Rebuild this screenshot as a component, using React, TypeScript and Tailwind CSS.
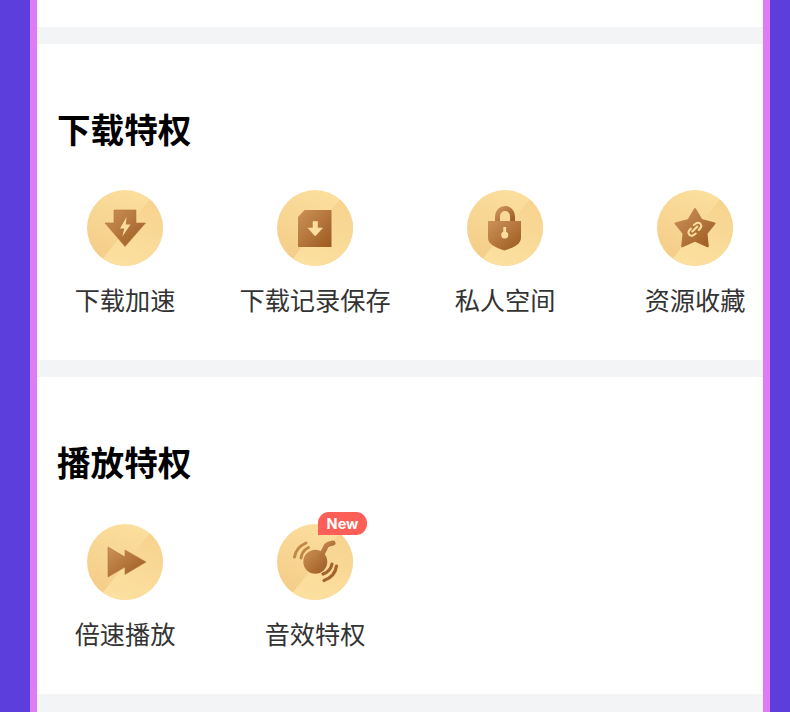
import type { ReactNode } from "react";

const cream = "#fbdd9f";
const brown = "url(#glyph)";

// shared gradients live in one hidden svg so each badge can reference them
function SharedDefs() {
  return (
    <svg width="0" height="0" className="absolute">
      <defs>
        <linearGradient id="glyph" x1="0" y1="0" x2="1" y2="1">
          <stop offset="0" stopColor="#cc9257" />
          <stop offset="1" stopColor="#9c5a1f" />
        </linearGradient>
        <linearGradient id="discLeft" x1="0.7" y1="0" x2="0.2" y2="1">
          <stop offset="0" stopColor="#fcdf9e" />
          <stop offset="1" stopColor="#f3cc87" />
        </linearGradient>
        <linearGradient id="discRight" x1="0.8" y1="0" x2="0.4" y2="1">
          <stop offset="0" stopColor="#f6d18c" />
          <stop offset="1" stopColor="#fce0a0" />
        </linearGradient>
        <clipPath id="discClip">
          <circle cx="38" cy="38" r="38" />
        </clipPath>
      </defs>
    </svg>
  );
}

function Disc({ children }: { children: ReactNode }) {
  return (
    <svg width="76" height="76" viewBox="0 0 76 76" className="block">
      <circle cx="38" cy="38" r="38" fill="url(#discLeft)" />
      <path d="M70 0 L10 76 H76 V0 Z" fill="url(#discRight)" clipPath="url(#discClip)" />
      {children}
    </svg>
  );
}

const icons: Record<string, ReactNode> = {
  speed: (
    <>
      <path d="M27 20 H49 V33 H58.5 L38 56.5 L18 33 H27 Z" fill={brown} stroke="#b3763a" strokeWidth="0.6" strokeLinejoin="round" />
      <path d="M39.5 27 L33 38.5 H37.3 L35.3 46.5 L43.5 34.5 H38.8 Z" fill={cream} />
    </>
  ),
  record: (
    <>
      <path d="M27.5 20 H54.5 V57 H21 V27 Z" fill={brown} />
      <path d="M36 31.5 H40.5 V38 H45.5 L38.2 46 L31 38 H36 Z" fill={cream} stroke={cream} strokeWidth="0.6" strokeLinejoin="round" />
    </>
  ),
  lock: (
    <>
      <path d="M30.5 33 V26 A7.5 7.5 0 0 1 45.5 26 V33" fill="none" stroke={brown} strokeWidth="5" />
      <path d="M21 31 H54 V48 C54 54 46 58 37.5 60.5 C29 58 21 54 21 48 Z" fill={brown} />
      <rect x="36.3" y="37" width="2.8" height="7" fill={cream} />
      <circle cx="37.7" cy="45" r="3.5" fill={cream} />
    </>
  ),
  star: (
    <>
      <path
        d="M38 19 L44.5 30 L57.5 33.5 L49.5 43.5 L50.8 56.3 L38 50.5 L25.2 56.3 L26.5 43.5 L18.5 33.5 L31.5 30 Z"
        fill={brown}
        stroke={brown}
        strokeWidth="2"
        strokeLinejoin="round"
      />
      <g fill="none" stroke={cream} strokeWidth="2.1" strokeLinecap="round">
        <path d="M36.8 35 L39.8 33 A3.2 3.2 0 0 1 43.8 37.5 L41.8 40" />
        <path d="M38.8 43.5 L35.8 45.5 A3.2 3.2 0 0 1 31.8 41 L33.8 38.5" />
        <path d="M35.3 41.5 L40.3 36.5" />
      </g>
    </>
  ),
  forward: (
    <path d="M21 23 L38 33 V26 L59 38 L38 50.5 V43 L21 53 Z" fill={brown} stroke="#b3763a" strokeWidth="0.6" strokeLinejoin="round" />
  ),
  sound: (
    <>
      <circle cx="38.3" cy="37.7" r="12" fill={brown} />
      <path d="M43 31 C47.5 28 47.5 25 49 22 C50.5 20 53 19.5 56 19" fill="none" stroke={brown} strokeWidth="5" strokeLinecap="round" />
      <g fill="none" stroke="#c08848" strokeWidth="3" strokeLinecap="round">
        <path d="M17.5 33 C18.5 27 22.5 22 29 19" />
        <path d="M24 34 C24.5 29 27 26 31.5 23.5" />
      </g>
      <g fill="none" stroke="#a4642a" strokeWidth="3.2" strokeLinecap="round">
        <path d="M46 50 C50.5 48.5 54 45 55 40" />
        <path d="M47 56.5 C54 54 58.5 49 59.5 42" />
      </g>
    </>
  ),
};

const sections = [
  {
    title: "下载特权",
    height: "h-[316px]",
    gap: "mt-[36px]",
    items: [
      { label: "下载加速", icon: "speed" },
      { label: "下载记录保存", icon: "record" },
      { label: "私人空间", icon: "lock" },
      { label: "资源收藏", icon: "star" },
    ],
  },
  {
    title: "播放特权",
    height: "h-[317px]",
    gap: "mt-[37px]",
    items: [
      { label: "倍速播放", icon: "forward" },
      { label: "音效特权", icon: "sound", badge: "New" },
    ],
  },
];

function Perk({ label, icon, badge }: { label: string; icon: string; badge?: string }) {
  return (
    <div className="flex w-[100px] flex-col items-center">
      <div className="relative">
        <Disc>{icons[icon]}</Disc>
        {badge && (
          <span className="absolute -top-3 left-[41px] flex h-[23px] w-[49px] items-center justify-center rounded-[11px] rounded-bl-none bg-[#fb5f57] text-[14.5px] font-bold text-white [font-family:Inter,sans-serif]">
            {badge}
          </span>
        )}
      </div>
      <span className="mt-[15px] text-[25.2px] leading-9 whitespace-nowrap text-[#333333]">{label}</span>
    </div>
  );
}

export default function App() {
  return (
    <div className="h-[712px] overflow-hidden bg-[#5c3edd] pr-5 pl-[30px] [font-family:'Noto_Sans_CJK_SC',sans-serif]">
      <SharedDefs />
      <div className="h-full border-x-[7px] border-[#e07bf8] bg-[#f3f4f6]">
        <div className="h-[27px] bg-white" />
        {sections.map((section) => (
          <section key={section.title} className={`mt-[17px] ${section.height} bg-white pt-[60px] pl-[38px]`}>
            <h2 className="-ml-[18px] text-[33.6px] leading-[50px] font-bold text-black">{section.title}</h2>
            <div className={`${section.gap} flex gap-x-[90px]`}>
              {section.items.map((item) => (
                <Perk key={item.label} {...item} />
              ))}
            </div>
          </section>
        ))}
      </div>
    </div>
  );
}
